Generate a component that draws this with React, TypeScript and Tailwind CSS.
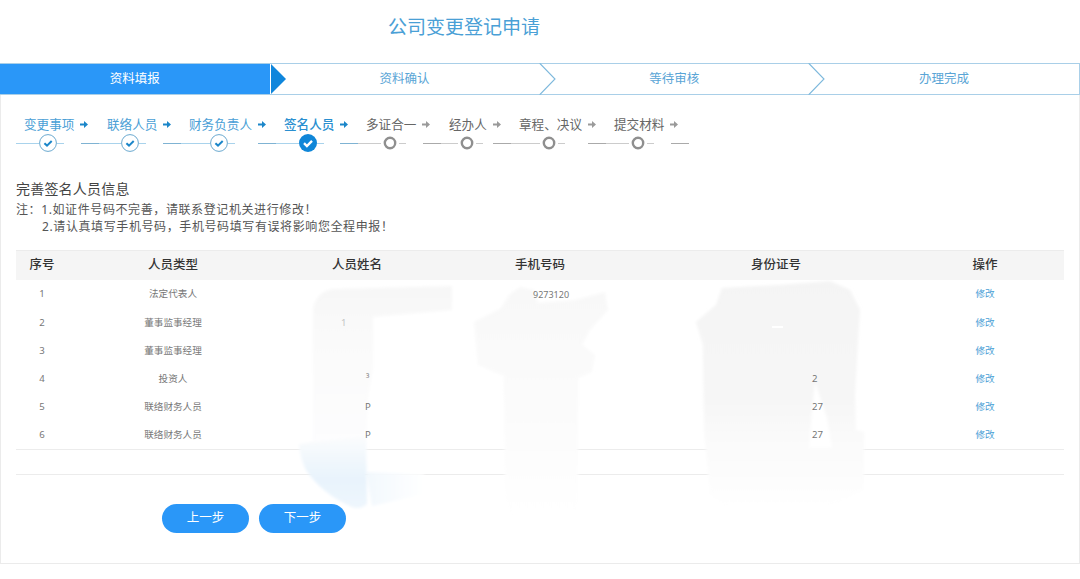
const steps = [
  { label: "变更事项", state: "done", w: "w-[83px]", left: "w-[23px]" },
  { label: "联络人员", state: "done", w: "w-[82px]", left: "w-[22px]" },
  { label: "财务负责人", state: "done", w: "w-[95px]", left: "w-[29px]" },
  { label: "签名人员", state: "active", w: "w-[82px]", left: "w-[23px]" },
  { label: "多证合一", state: "todo", w: "w-[83px]", left: "w-[23px]" },
  { label: "经办人", state: "todo", w: "w-[70px]", left: "w-[17px]" },
  { label: "章程、决议", state: "todo", w: "w-[95px]", left: "w-[29px]" },
  { label: "提交材料", state: "todo", w: "w-[83px]", left: "w-[23px]" },
];

const rows = [
  { n: 1, type: "法定代表人", name: "", namePad: "", phone: "9273120", id: "" },
  { n: 2, type: "董事监事经理", name: "1", namePad: "pl-[63px] text-[#c4c4c4]", phone: "", id: "" },
  { n: 3, type: "董事监事经理", name: "", namePad: "", phone: "", id: "" },
  { n: 4, type: "投资人", name: "³", namePad: "pl-[88px] text-[#888888]", phone: "", id: "2" },
  { n: 5, type: "联络财务人员", name: "P", namePad: "pl-[87px]", phone: "", id: "27" },
  { n: 6, type: "联络财务人员", name: "P", namePad: "pl-[87px]", phone: "", id: "27" },
];

function Marker({ state }: { state: string }) {
  if (state === "todo") {
    return (
      <svg width="18" height="18" viewBox="0 0 18 18" className="shrink-0">
        <circle cx="9" cy="9" r="5.2" fill="#fff" stroke="#8f8f8f" strokeWidth="2.4" />
      </svg>
    );
  }
  if (state === "active") {
    return (
      <svg width="18" height="18" viewBox="0 0 18 18" className="shrink-0">
        <circle cx="9" cy="9" r="9" fill="#0f86d8" />
        <path d="M5 9.2l2.9 2.8L13 6.9" fill="none" stroke="#fff" strokeWidth="2.4" />
      </svg>
    );
  }
  return (
    <svg width="18" height="18" viewBox="0 0 18 18" className="shrink-0">
      <circle cx="9" cy="9" r="8.4" fill="#fff" stroke="#6aa9cf" strokeWidth="1" />
      <path d="M5.4 9.2l2.6 2.4L12.7 7" fill="none" stroke="#1b86c9" strokeWidth="2" />
    </svg>
  );
}

function Arrow({ color }: { color: string }) {
  return (
    <svg width="8" height="7" viewBox="0 0 8 7" className="ml-[6px] shrink-0">
      <path d="M0 2.5h4V0l4 3.5L4 7V4.5H0z" fill={color} />
    </svg>
  );
}

function Chevron() {
  return (
    <svg width="17" height="32" viewBox="0 0 17 32" className="absolute left-[-1px] top-[-1px]">
      <path d="M0.5 0L16 16L0.5 32" fill="#fff" stroke="#7db8dc" strokeWidth="1.1" />
    </svg>
  );
}

function Smears() {
  return (
    <svg width="1080" height="579" viewBox="0 0 1080 579" className="absolute left-0 top-0 pointer-events-none">
      <defs>
        <filter id="soft" x="-20%" y="-20%" width="140%" height="140%">
          <feGaussianBlur stdDeviation="1.6" />
        </filter>
        <linearGradient id="g1" x1="0" y1="0" x2="0" y2="1">
          <stop offset="0" stopColor="#f7f7f7" />
          <stop offset="0.5" stopColor="#fbfbfb" />
          <stop offset="1" stopColor="#fdfdfe" />
        </linearGradient>
        <linearGradient id="g2" x1="0" y1="0" x2="0" y2="1">
          <stop offset="0" stopColor="#f8f8f8" />
          <stop offset="0.35" stopColor="#fafafa" />
          <stop offset="0.7" stopColor="#fdfdfd" />
          <stop offset="1" stopColor="#ffffff" />
        </linearGradient>
        <linearGradient id="g3" x1="0" y1="0" x2="0" y2="1">
          <stop offset="0" stopColor="#f4f4f4" />
          <stop offset="0.5" stopColor="#f6f6f6" />
          <stop offset="0.72" stopColor="#fbfbfb" />
          <stop offset="1" stopColor="#ffffff" />
        </linearGradient>
        <linearGradient id="blue" x1="0" y1="0" x2="0" y2="1">
          <stop offset="0" stopColor="#fbfcfd" />
          <stop offset="0.6" stopColor="#e8f3fc" />
          <stop offset="1" stopColor="#eef6fd" />
        </linearGradient>
        <linearGradient id="blueFade" x1="0" y1="0" x2="1" y2="0">
          <stop offset="0" stopColor="#f2f8fd" />
          <stop offset="1" stopColor="#ffffff" />
        </linearGradient>
      </defs>
      {/* left stroke */}
      <path d="M313 310 Q315 293 332 289 L452 286 L452 310 L373 317 L373 370 L368 400 L366 450 L300 450 L313 440 Z" fill="url(#g1)" filter="url(#soft)" />
      <path d="M366 472 L424 474 L424 494 L372 506 Z" fill="url(#blueFade)" filter="url(#soft)" />
      <path d="M299 444 L366 436 L367 504 Q360 510 352 507 Q322 494 306 470 Q300 458 299 444 Z" fill="url(#blue)" filter="url(#soft)" />
      {/* middle stroke */}
      <path d="M474 322 L500 309 L510 294 L520 287 L534 290 L538 303 L575 300 L605 292 L608 310 L590 330 L582 345 L595 355 L592 372 L578 378 L578 500 L574 532 L514 535 L505 500 L504 376 L478 365 Z" fill="url(#g2)" filter="url(#soft)" />
      {/* right stroke */}
      <path d="M696 322 L716 305 L722 288 L780 285 L830 281 L850 290 L860 310 L858 340 L855 395 L856 430 L864 432 L864 490 L825 510 L735 515 L710 495 L704 430 L703 345 Z" fill="url(#g3)" filter="url(#soft)" />
      <path d="M815 382 L827 418 L832 448 L809 448 L812 410 Z" fill="#fff" filter="url(#soft)" />
      <rect x="772" y="326" width="11" height="2" fill="#fff" />
    </svg>
  );
}

export default function App() {
  const font = { fontFamily: '"Noto Sans", "Noto Sans CJK SC", sans-serif' };
  return (
    <div className="relative h-[579px] w-[1080px] overflow-hidden bg-white" style={font}>
      <header className="flex h-[63px] w-[928px] items-start justify-center pt-[13px] text-[19px] leading-[28px] text-[#4aa0d6]">
        公司变更登记申请
      </header>

      <nav className="relative flex h-[32px] w-[1080px] border-y border-r border-[#a9cfe8] text-[12.5px] leading-[30px] text-[#5aa5d6]">
        <div className="relative w-[270px] bg-[#2a97f8] text-center text-white">
          资料填报
          <span className="absolute left-[271px] top-0 h-0 w-0 border-y-[15px] border-l-[15px] border-y-transparent border-l-[#0f86dc]" />
        </div>
        <div className="w-[270px] text-center">资料确认</div>
        <div className="relative w-[270px] text-center">
          <Chevron />
          等待审核
        </div>
        <div className="relative w-[270px] text-center">
          <Chevron />
          办理完成
        </div>
      </nav>

      <main className="h-[469px] border-x border-b border-[#ebebeb] px-[15px] pt-[20px]">
        <div className="flex">
          {steps.map((s) => {
            const todo = s.state === "todo";
            const labelColor = todo ? "text-[#666666]" : s.state === "active" ? "font-medium text-[#2a8fd0]" : "text-[#4aa0d6]";
            return (
              <div key={s.label} className={s.w}>
                <div className="flex h-[18px] items-center pl-[8px] pt-[1px]">
                  <span className={`whitespace-nowrap text-[12.6px] leading-[18px] ${labelColor}`}>{s.label}</span>
                  <Arrow color={todo ? "#9a9a9a" : "#1b86c9"} />
                </div>
                <div className="mt-px flex h-[18px] items-center">
                  <span className={`h-px ${s.left} ${todo ? "bg-[#cccccc]" : "bg-[#a9d3ec]"}`} />
                  <Marker state={s.state} />
                  <span className={`h-px w-[7px] ${todo ? "bg-[#cccccc]" : "bg-[#a9d3ec]"}`} />
                  <span className="flex-1" />
                  <span className={`h-px w-[18px] ${todo ? "bg-[#aaaaaa]" : "bg-[#7fb3d3]"}`} />
                </div>
              </div>
            );
          })}
        </div>

        <h2 className="mt-[28px] text-[14px] font-normal leading-[18px] tracking-[0.2px] text-[#444444]">完善签名人员信息</h2>
        <div className="mt-[3px] text-[12px] leading-[17px] tracking-[0.6px] text-[#555555]">
          <p>注：1.如证件号码不完善，请联系登记机关进行修改！</p>
          <p className="pl-[26px]">2.请认真填写手机号码，手机号码填写有误将影响您全程申报！</p>
        </div>

        <table className="mt-[15px] w-[1048px] table-fixed border-collapse">
          <colgroup>
            <col className="w-[52px]" />
            <col className="w-[210px]" />
            <col className="w-[158px]" />
            <col className="w-[208px]" />
            <col className="w-[264px]" />
            <col className="w-[156px]" />
          </colgroup>
          <thead>
            <tr className="h-[29px] border-t border-[#ececec] bg-[#f5f5f5] text-[12.5px] text-[#333333]">
              <th className="font-medium">序号</th>
              <th className="font-medium">人员类型</th>
              <th className="font-medium">人员姓名</th>
              <th className="font-medium">手机号码</th>
              <th className="font-medium">身份证号</th>
              <th className="pr-[2px] font-medium">操作</th>
            </tr>
          </thead>
          <tbody className="text-[9.6px] text-[#777777]">
            {rows.map((r) => (
              <tr key={r.n} className="h-[28.2px]">
                <td className="pt-[2px] text-center">{r.n}</td>
                <td className="pt-[2px] text-center">{r.type}</td>
                <td className={`pt-[2px] ${r.namePad}`}>
                  <span className="relative z-10">{r.name}</span>
                </td>
                <td className="pl-[97px] pt-[2px] text-[9px]">
                  <span className="relative z-10">{r.phone}</span>
                </td>
                <td className="pl-[168px] pt-[2px]">
                  <span className="relative z-10">{r.id}</span>
                </td>
                <td className="pr-[2px] pt-[2px] text-center text-[#4aa0d6]">修改</td>
              </tr>
            ))}
          </tbody>
        </table>
        <div className="h-[26px] border-y border-[#ececec]" />

        <div className="mt-[29px] flex gap-[10px] pl-[146px]">
          <button className="h-[29px] w-[87px] rounded-[15px] bg-[#2a97f8] text-[12.5px] text-white">上一步</button>
          <button className="h-[29px] w-[87px] rounded-[15px] bg-[#2a97f8] text-[12.5px] text-white">下一步</button>
        </div>
      </main>

      <Smears />
    </div>
  );
}
